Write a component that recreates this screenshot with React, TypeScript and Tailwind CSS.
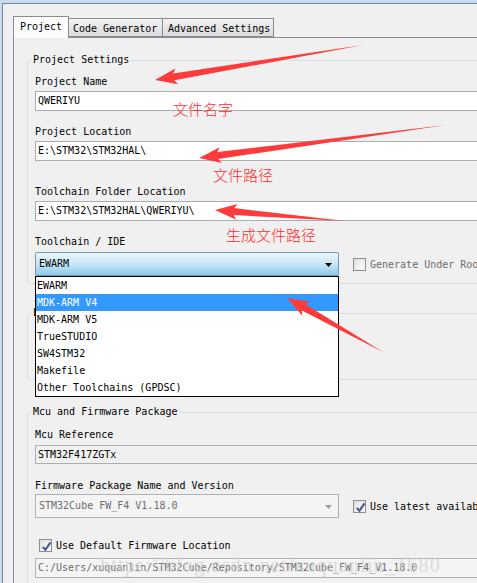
import React from "react";

type Pt = [number, number];

// tapered annotation arrow: thin tail, wide shaft near head, then the head
function arrowPoints(tail: Pt, tip: Pt, headLen: number, headW: number, shaftW: number) {
  const dx = tip[0] - tail[0];
  const dy = tip[1] - tail[1];
  const len = Math.hypot(dx, dy);
  const ux = dx / len;
  const uy = dy / len;
  const nx = -uy;
  const ny = ux;
  const bx = tip[0] - ux * headLen;
  const by = tip[1] - uy * headLen;
  const pts: Pt[] = [
    tail,
    [bx + (nx * shaftW) / 2, by + (ny * shaftW) / 2],
    [bx - ux * 3 + (nx * headW) / 2, by - uy * 3 + (ny * headW) / 2],
    tip,
    [bx - ux * 3 - (nx * headW) / 2, by - uy * 3 - (ny * headW) / 2],
    [bx - (nx * shaftW) / 2, by - (ny * shaftW) / 2],
  ];
  return pts.map((p) => `${p[0].toFixed(1)},${p[1].toFixed(1)}`).join(" ");
}

const arrows: { tail: Pt; tip: Pt }[] = [
  { tail: [363, 45], tip: [155, 80] },
  { tail: [446, 125], tip: [199, 158] },
  { tail: [345, 221], tip: [215, 210] },
  { tail: [383, 352], tip: [287, 298] },
];

const toolchains = [
  "EWARM",
  "MDK-ARM V4",
  "MDK-ARM V5",
  "TrueSTUDIO",
  "SW4STM32",
  "Makefile",
  "Other Toolchains (GPDSC)",
];

function Checkbox({ checked }: { checked?: boolean }) {
  return (
    <div className="w-[13px] h-[13px] shrink-0 border border-[#8e8f8f] bg-gradient-to-br from-[#dcdcdc] to-[#fbfbfb] p-[2px]">
      <div className="w-full h-full bg-gradient-to-br from-[#e7e7e7] to-[#f9f9f9] relative">
        {checked && (
          <svg viewBox="0 0 9 9" className="absolute -left-[1px] -top-[1px] w-[11px] h-[11px]">
            <path d="M1.5 4.8 L3.6 7.2 L7.8 1.2" fill="none" stroke="#4a5f97" strokeWidth="1.8" />
          </svg>
        )}
      </div>
    </div>
  );
}

function Label({ children, className = "" }: { children: React.ReactNode; className?: string }) {
  return <div className={`h-[16px] leading-[16px] ${className}`}>{children}</div>;
}

export default function App() {
  return (
    <div className="relative w-[477px] h-[583px] overflow-hidden bg-[#c9dbee] pt-[3px] pl-[2px] font-['DejaVu_Sans_Mono',monospace] text-[10px] text-black">
      <div className="h-full border-t border-l border-[#7b8898] bg-[#f0f0f0] pl-[10px] pt-[12px]">
        {/* tabs */}
        <div className="flex items-end h-[21px]">
          <div className="relative z-10 -mb-px h-[22px] w-[56px] border border-b-0 border-[#898c95] bg-[#fcfcfc] pl-[6px] leading-[20px]">
            Project
          </div>
          <div className="h-[19px] w-[94px] border-y border-r border-[#898c95] bg-gradient-to-b from-[#f2f2f2] to-[#dbdbdb] pl-[4px] leading-[19px]">
            Code Generator
          </div>
          <div className="h-[19px] w-[111px] border-y border-r border-[#898c95] bg-gradient-to-b from-[#f2f2f2] to-[#dbdbdb] pl-[5px] leading-[19px]">
            Advanced Settings
          </div>
        </div>

        {/* tab panel */}
        <div className="h-full border-t border-l border-[#898c95] pl-[13px]">
          <fieldset className="mt-[15px] w-[540px] rounded-[3px] border border-[#d5dfe5] pl-[7px] pb-[7px]">
            <legend className="-ml-[3px] px-[1px] leading-[14px]">Project Settings</legend>
            <Label className="mt-[7px]">Project Name</Label>
            <div className="mt-px h-[20px] border border-[#abadb3] bg-white pl-[2px] leading-[18px]">QWERIYU</div>
            <Label className="mt-[13px]">Project Location</Label>
            <div className="mt-px h-[20px] border border-[#abadb3] bg-white pl-[2px] leading-[18px]">E:\STM32\STM32HAL\</div>
            <Label className="mt-[23px]">Toolchain Folder Location</Label>
            <div className="mt-px h-[20px] border border-[#abadb3] bg-white pl-[2px] leading-[18px]">
              E:\STM32\STM32HAL\QWERIYU\
            </div>
            <Label className="mt-[13px]">Toolchain / IDE</Label>
            <div className="mt-[2px] flex items-center">
              <div className="relative h-[24px] w-[304px] rounded-[2px] border border-[#7c97ab] bg-gradient-to-b from-[#eaf6fd] via-[#c8e6f6] to-[#8ccbeb] pl-[3px] leading-[22px]">
                EWARM
                <svg viewBox="0 0 7 4" className="absolute right-[6px] top-[10px] w-[7px] h-[4px]">
                  <path d="M0 0 H7 L3.5 4 Z" fill="#000" />
                </svg>
              </div>
              <div className="ml-[14px]">
                <Checkbox />
              </div>
              <span className="ml-[4px] whitespace-nowrap text-[#6d6d6d]">Generate Under Root</span>
            </div>
          </fieldset>

          <fieldset className="mt-[22px] w-[540px] rounded-[3px] border border-[#d5dfe5] pl-[7px]">
            <legend className="-ml-[3px] px-[1px] leading-[14px]">L</legend>
            <div className="h-[59px]" />
          </fieldset>

          <fieldset className="mt-[25px] w-[540px] rounded-[3px] border border-[#d5dfe5] pl-[7px] pb-[20px]">
            <legend className="-ml-[3px] px-[1px] leading-[14px]">Mcu and Firmware Package</legend>
            <Label className="mt-[8px]">Mcu Reference</Label>
            <div className="mt-[2px] h-[19px] border border-[#abadb3] bg-[#f0f0f0] pl-[2px] leading-[17px]">STM32F417ZGTx</div>
            <Label className="mt-[14px]">Firmware Package Name and Version</Label>
            <div className="flex items-center">
              <div className="relative h-[24px] w-[304px] border border-[#adb2b5] bg-[#f4f4f4] pl-[3px] leading-[22px] text-[#6d6d6d]">
                STM32Cube FW_F4 V1.18.0
                <svg viewBox="0 0 7 4" className="absolute right-[6px] top-[10px] w-[7px] h-[4px]">
                  <path d="M0 0 H7 L3.5 4 Z" fill="#a0a0a0" />
                </svg>
              </div>
              <div className="ml-[14px]">
                <Checkbox checked />
              </div>
              <span className="ml-[4px] whitespace-nowrap">Use latest available version</span>
            </div>
            <div className="mt-[19px] flex h-[16px] items-center pl-[4px]">
              <Checkbox checked />
              <span className="ml-[4px]">Use Default Firmware Location</span>
            </div>
            <div className="mt-[5px] h-[20px] border border-[#adb2b5] bg-[#f4f4f4] pl-[2px] leading-[18px] text-[#6d6d6d]">
              C:/Users/xuquanlin/STM32Cube/Repository/STM32Cube_FW_F4_V1.18.0
            </div>
          </fieldset>
        </div>
      </div>

      {/* open toolchain list */}
      <div className="absolute left-[35px] top-[276px] w-[304px] border border-black bg-white">
        {toolchains.map((t, i) => (
          <div
            key={t}
            className={`h-[17px] pl-[1px] leading-[17px] ${i === 1 ? "bg-[#3399ff] text-white" : ""}`}
          >
            {t}
          </div>
        ))}
      </div>

      {/* blog watermark */}
      <div className="pointer-events-none absolute left-[100px] top-[550px] whitespace-nowrap font-['Liberation_Serif',serif] text-[20px] tracking-[1.2px] text-[#d2d2d2] opacity-70">
        https://blog.csdn.net/xuquanlin_1680
      </div>

      {/* red annotations */}
      <svg className="pointer-events-none absolute left-0 top-0" width="477" height="583">
        {arrows.map((a, i) => (
          <polygon key={i} points={arrowPoints(a.tail, a.tip, 19, 16, 7)} fill="#ff3a3a" />
        ))}
      </svg>
      <div className="absolute left-[173px] top-[100px] font-['Noto_Sans_CJK_SC',sans-serif] text-[15px] leading-[18px] font-light text-[#ff2b2b]">
        文件名字
      </div>
      <div className="absolute left-[213px] top-[166px] font-['Noto_Sans_CJK_SC',sans-serif] text-[15px] leading-[18px] font-light text-[#ff2b2b]">
        文件路径
      </div>
      <div className="absolute left-[226px] top-[226px] font-['Noto_Sans_CJK_SC',sans-serif] text-[15px] leading-[18px] font-light text-[#ff2b2b]">
        生成文件路径
      </div>
    </div>
  );
}
